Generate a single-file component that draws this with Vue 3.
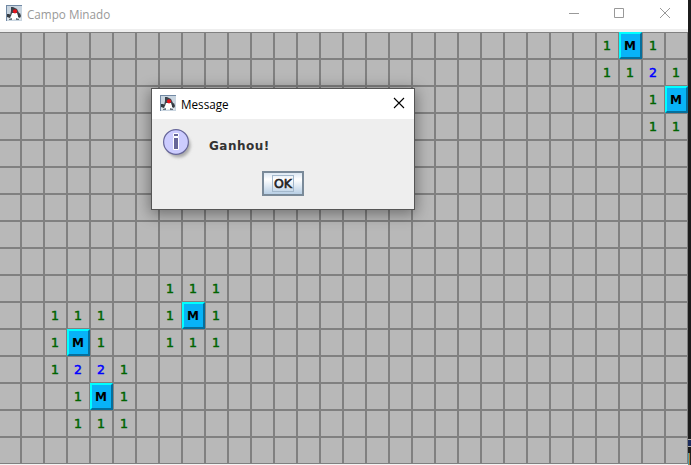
<script setup>
const COLS = 30
const ROWS = 16
const marks = {
  0: { 26: '1', 27: 'M', 28: '1' },
  1: { 26: '1', 27: '1', 28: '2', 29: '1' },
  2: { 28: '1', 29: 'M' },
  3: { 28: '1', 29: '1' },
  9: { 7: '1', 8: '1', 9: '1' },
  10: { 2: '1', 3: '1', 4: '1', 7: '1', 8: 'M', 9: '1' },
  11: { 2: '1', 3: 'M', 4: '1', 7: '1', 8: '1', 9: '1' },
  12: { 2: '1', 3: '2', 4: '2', 5: '1' },
  13: { 3: '1', 4: 'M', 5: '1' },
  14: { 3: '1', 4: '1', 5: '1' }
}
const kinds = { 1: 'one', 2: 'two', M: 'mine' }
const cells = []
for (let r = 0; r < ROWS; r++) {
  for (let c = 0; c < COLS; c++) {
    const text = marks[r]?.[c] ?? ''
    cells.push({ id: r * COLS + c, text, kind: kinds[text] ?? '' })
  }
}
</script>

<template>
  <div class="screen">
    <svg width="0" height="0" class="defs">
      <symbol id="duke" viewBox="0 0 16 16">
        <rect width="16" height="16" fill="#c9d5e0" />
        <path d="M0 0H16V1H1V16H0Z" fill="#7189a4" />
        <path d="M1 12h14v3H1z" fill="#dde4ea" />
        <path d="M5 2h2l4 2 2 4v3H4l1-5z" fill="#3b434b" />
        <path d="M6 8h5l1 3 0 4-3-1-4 1 0-4z" fill="#fff" />
        <path d="M1 9h2l2 1-1 3-3-1zM12 9l2-1 1 3-1 2-2-1z" fill="#343b42" />
        <path d="M3 14l3-1v2H3zM10 13l3 1v1h-3z" fill="#69747e" />
        <circle cx="9" cy="6.300" r="2.100" fill="#e5141c" />
      </symbol>
    </svg>
    <div class="window">
      <header class="titlebar">
        <svg class="duke"><use href="#duke" /></svg>
        <span class="title">Campo Minado</span>
        <svg class="controls" width="103" height="12" viewBox="0 0 103 12" fill="none" stroke="#999">
          <path d="M0 6.500H10M45.500 1.500h9v9h-9zM91 1l10 10M101 1L91 11" />
        </svg>
      </header>
      <main class="board">
        <div v-for="cell in cells" :key="cell.id" class="cell" :class="cell.kind">{{ cell.text }}</div>
      </main>
    </div>
    <aside class="desktop"><i class="blue"></i><i class="teal"></i></aside>

    <section class="dialog">
      <header class="dialog-title">
        <svg class="duke"><use href="#duke" /></svg>
        <span class="title">Message</span>
        <svg class="close" width="10" height="10" viewBox="0 0 10 10" stroke="#000" stroke-width="1.1"><path d="M0 0l10 10M10 0L0 10" /></svg>
      </header>
      <div class="dialog-body">
        <div class="message">
          <svg class="info" width="32" height="32" viewBox="0 0 32 32">
            <defs>
              <filter id="soft" x="-20%" y="-20%" width="140%" height="140%"><feGaussianBlur stdDeviation="1.5" /></filter>
            </defs>
            <circle cx="16.500" cy="16.500" r="12" fill="#aaa" filter="url(#soft)" />
            <circle cx="14" cy="13" r="12.400" fill="#ccccff" stroke="#666699" stroke-width="1.2" />
            <path d="M11.500 4.500h5v3h-5zM11.500 8.500h5v12h-5z" fill="#666699" stroke="#fff" />
          </svg>
          <span class="text">Ganhou!</span>
        </div>
        <button class="ok"><span>OK</span></button>
      </div>
    </section>
  </div>
</template>

<style>
body { margin: 0; overflow: hidden; }
</style>

<style scoped>
.screen { position: relative; display: flex; width: 691px; height: 465px; overflow: hidden; background: #f4f4f4; }
.defs { position: absolute; }
.window { width: 688px; overflow: hidden; }
.titlebar { box-sizing: border-box; height: 32px; display: flex; align-items: flex-start; padding: 5px 16px 0 6px; background: #fff; border-bottom: 3px solid #eee; }
.duke { width: 16px; height: 16px; flex: none; }
.title { font: 11.7px/18px "Open Sans", "Noto Sans", sans-serif; }
.titlebar .title { margin-left: 5px; color: #999; }
.titlebar .controls { margin: 2px 0 0 auto; }
.board { display: grid; grid-template-columns: repeat(30, 23px); grid-auto-rows: 27px; width: 690px; margin-left: -2px; }
.cell { box-sizing: border-box; border: 1px solid #808080; background: #b8b8b8; text-align: center; padding-right: 1px; font: bold 12px/27px "DejaVu Sans", sans-serif; }
.one, .two { font-weight: normal; font-size: 12.5px; line-height: 25px; -webkit-text-stroke: .5px currentColor; }
.one { color: #006400; }
.two { color: #0000ff; }
.mine { border: 2px solid; border-color: #00ffff #056f9c #056f9c #00ffff; background: #08b3f7; color: #000; line-height: 25px; }
.desktop { width: 3px; background: #1c1c1c; display: flex; flex-direction: column; justify-content: flex-end; gap: 6px; }
.desktop i { display: block; }
.blue { box-sizing: border-box; height: 8px; background: #1b2b5c; border-top: 1px solid #aaa; border-bottom: 1px solid #aaa; }
.teal { height: 12px; background: linear-gradient(90deg, #4f9ba8 1px, #a97829 1px 2px, #222 2px); }
.dialog { position: absolute; left: 151px; top: 88px; box-sizing: border-box; width: 264px; height: 122px; border: 1px solid #555; background: #eee; box-shadow: 0 3px 14px 1px rgba(0,0,0,.4); }
.dialog-title { box-sizing: border-box; height: 30px; background: #fff; display: flex; padding: 6px 10px 0 8px; }
.dialog-title .title { margin-left: 5px; color: #000; }
.close { margin: 3px 0 0 auto; overflow: visible; }
.dialog-body { display: flex; flex-direction: column; align-items: center; padding: 10px 10px 0; }
.message { display: flex; align-items: center; align-self: stretch; height: 32px; }
.text { margin-left: 15px; padding-top: 2px; font: bold 12px/16px "DejaVu Sans", sans-serif; letter-spacing: .5px; color: #333; }
.ok { width: 42px; height: 25px; margin-top: 10px; padding: 2px; border: 2px solid #7a8a99; background: linear-gradient(#dde8f3, #fff 30%, #b8cfe5); display: flex; align-items: center; justify-content: center; font: 12.5px/15px "DejaVu Sans", sans-serif; -webkit-text-stroke: .6px #222; color: #222; }
.ok span { box-sizing: border-box; width: 22px; height: 17px; border: 1px solid #a3b8cc; }
</style>
